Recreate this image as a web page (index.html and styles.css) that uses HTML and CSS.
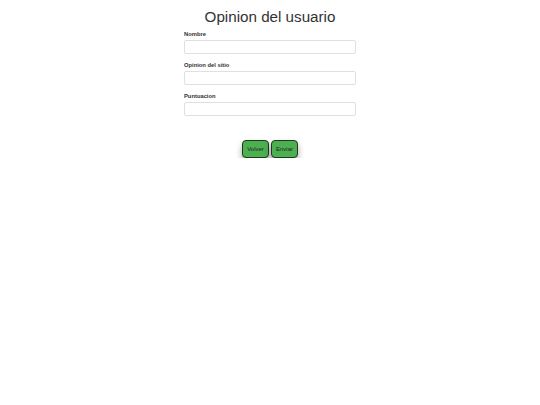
FILE: index.html
```html
<!DOCTYPE html>
<html lang="es">
<head>
<meta charset="utf-8">
<title>Opinion del usuario</title>
<link rel="stylesheet" href="styles.css">
</head>
<body>
<main class="page">
  <h1 class="title">Opinion del usuario</h1>
  <form class="form">
    <div class="field">
      <label class="label" for="nombre">Nombre</label>
      <input class="input" id="nombre" type="text">
    </div>
    <div class="field">
      <label class="label" for="opinion">Opinion del sitio</label>
      <input class="input" id="opinion" type="text">
    </div>
    <div class="field">
      <label class="label" for="puntuacion">Puntuacion</label>
      <input class="input" id="puntuacion" type="text">
    </div>
    <div class="actions">
      <button class="btn" type="button">Volver</button>
      <button class="btn" type="submit">Enviar</button>
    </div>
  </form>
</main>
</body>
</html>
```

FILE: styles.css
```css
* { box-sizing: border-box; }
html, body { margin: 0; padding: 0; background: #fff; }
body { font-family: "Liberation Sans", Arial, sans-serif; color: #333; }
.page { width: 172px; margin: 0 auto; padding-top: 7px; }
.title {
  margin: 0 -40px 3px;
  font-size: 15.2px;
  font-weight: 400;
  line-height: 20px;
  text-align: center;
  color: #333;
}
.form { display: flex; flex-direction: column; }
.field { display: flex; flex-direction: column; margin-bottom: 7px; }
.label {
  font-size: 5.8px;
  font-weight: 700;
  line-height: 8px;
  margin-bottom: 2px;
  color: #333;
}
.input {
  height: 14px;
  width: 100%;
  border: 1px solid #e0e0e0;
  border-radius: 2px;
  background: #fff;
  padding: 0 4px;
  margin: 0;
  font-size: 6px;
}
.actions { display: flex; justify-content: center; gap: 2px; margin-top: 17px; }
.btn {
  width: 27px;
  height: 18px;
  padding: 0;
  margin: 0;
  background: #4caf50;
  border: 1.5px solid #1f3a20;
  border-radius: 4px;
  font-family: "Liberation Sans", Arial, sans-serif;
  font-size: 6px;
  color: #222;
  box-shadow: 0 4px 6px rgba(0,0,0,0.35);
}
```
